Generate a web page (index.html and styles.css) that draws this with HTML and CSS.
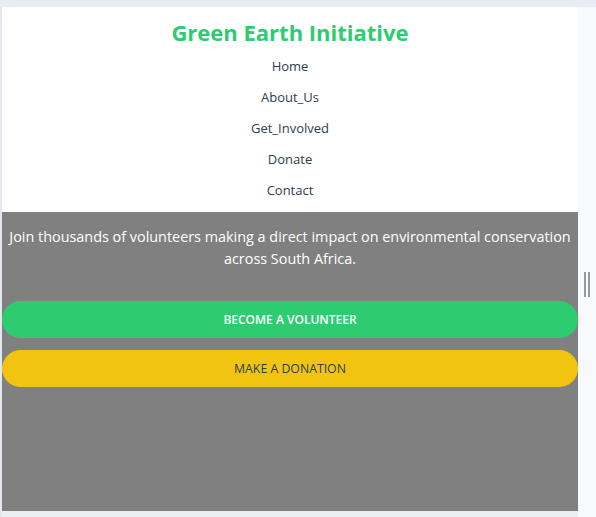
FILE: index.html
```html
<!DOCTYPE html>
<html lang="en">
<head>
<meta charset="utf-8">
<title>Green Earth Initiative</title>
<link rel="stylesheet" href="styles.css">
</head>
<body>
<div class="topstrip"></div>
<div class="layout">
  <div class="page">
    <header class="site-header">
      <h1 class="logo">Green Earth Initiative</h1>
      <nav class="nav">
        <a href="#">Home</a>
        <a href="#">About_Us</a>
        <a href="#">Get_Involved</a>
        <a href="#">Donate</a>
        <a href="#">Contact</a>
      </nav>
    </header>
    <section class="hero">
      <p class="hero-text">Join thousands of volunteers making a direct impact on environmental conservation across South Africa.</p>
      <div class="actions">
        <a class="btn btn-green" href="#">Become a Volunteer</a>
        <a class="btn btn-yellow" href="#">Make a Donation</a>
      </div>
    </section>
  </div>
  <aside class="side">
    <div class="grip"><span></span><span></span></div>
  </aside>
</div>
</body>
</html>
```
FILE: styles.css
```css
* { box-sizing: border-box; }
html, body { margin: 0; padding: 0; }
body {
  font-family: "Open Sans", "Liberation Sans", sans-serif;
  background: #ebefef;
  height: 517px;
  overflow: hidden;
}
.topstrip {
  height: 7px;
  background: #e8ecf4;
}
.layout {
  display: flex;
  padding-left: 2px;
  background: linear-gradient(to right, #e3e7ee 0, #e3e7ee 2px, transparent 2px);
}
.page {
  width: 576px;
  flex: none;
}
.side {
  flex: 1;
  background: #f8f9fd;
  height: 510px;
  padding-top: 265px;
  display: flex;
  justify-content: center;
}
.grip {
  display: flex;
  gap: 2px;
  height: 25px;
}
.grip span {
  width: 2px;
  background: #9a9a9a;
}
.site-header {
  background: #fff;
  text-align: center;
  padding: 11px 0 6px;
}
.logo {
  margin: 0;
  font-size: 22px;
  font-weight: 700;
  color: #2ecc71;
  line-height: 28px;
}
.nav {
  display: flex;
  flex-direction: column;
  align-items: center;
  margin-top: 5px;
}
.nav a {
  font-size: 13px;
  font-weight: 500;
  color: #2c3e50;
  text-decoration: none;
  line-height: 31px;
}
.hero {
  background: #808080;
  height: 299px;
  padding-top: 14px;
  text-align: center;
}
.hero-text {
  margin: 0 0 31px;
  color: #fff;
  font-size: 14.4px;
  line-height: 22px;
  padding: 0 4px;
}
.actions {
  display: flex;
  flex-direction: column;
  gap: 12px;
}
.btn {
  display: block;
  height: 37px;
  line-height: 37px;
  border-radius: 19px;
  text-decoration: none;
  text-transform: uppercase;
  font-size: 12px;
  font-weight: 600;
}
.btn-green { background: #2ecc71; color: #fff; }
.btn-yellow { background: #f1c40f; color: #2c3e50; font-weight: 400; font-size: 12.3px; }
```
